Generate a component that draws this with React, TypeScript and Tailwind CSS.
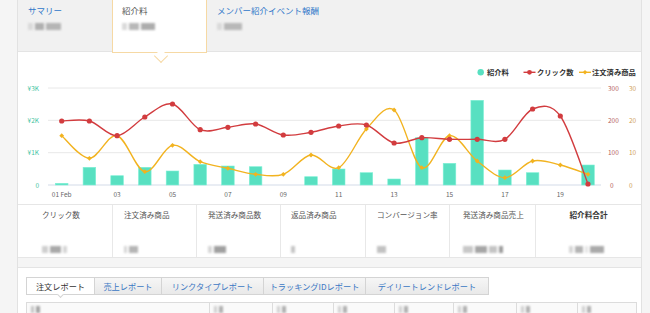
import React from "react";

const FONT = { fontFamily: '"Noto Sans CJK JP", "Noto Sans", sans-serif' };

const X0 = 61.7;
const STEP = 27.7;
const BASE = 185;

const red = [121, 121, 135.7, 117, 104, 129.7, 127.3, 124, 135, 132.3, 126, 125, 143, 137.7, 139.3, 139.3, 139.3, 109, 116, 184];
const yellow = [135.7, 158.3, 135.7, 171.7, 145.3, 161.7, 168.3, 174.3, 174.3, 155, 167.7, 129, 110, 167.7, 135.7, 161, 177.7, 161, 165, 174.3];
const bars: (number | null)[] = [183.3, 167.3, 175.7, 167.3, 171, 164.3, 166, 166.7, null, 176.7, 169, 172.7, 179, 137.7, 163.3, 100.3, 170, 172.7, null, 165];

const xAt = (i: number) => X0 + i * STEP;

function spline(ys: number[]) {
  const pts = ys.map((y, i) => [xAt(i), y]);
  let d = `M${pts[0][0]},${pts[0][1]}`;
  for (let i = 0; i < pts.length - 1; i++) {
    const p0 = pts[i - 1] || pts[i];
    const p1 = pts[i];
    const p2 = pts[i + 1];
    const p3 = pts[i + 2] || p2;
    const c1x = p1[0] + (p2[0] - p0[0]) / 6;
    const c1y = p1[1] + (p2[1] - p0[1]) / 6;
    const c2x = p2[0] - (p3[0] - p1[0]) / 6;
    const c2y = p2[1] - (p3[1] - p1[1]) / 6;
    d += ` C${c1x},${c1y} ${c2x},${c2y} ${p2[0]},${p2[1]}`;
  }
  return d;
}

// pixelated placeholder for hidden numbers
function Blur({ parts }: { parts: [number, string][] }) {
  return (
    <div className="flex h-[7px] items-center gap-[2px] blur-[0.8px]">
      {parts.map(([w, c], i) => (
        <span key={i} className="h-[7px]" style={{ width: w, backgroundColor: c }} />
      ))}
    </div>
  );
}

const stats = [
  { label: "クリック数", w: "w-[95px] pl-[24px]", parts: [[6, "#cfcfcf"], [11, "#a9a9a9"], [4, "#d6d6d6"]] },
  { label: "注文済み商品", w: "w-[84px] pl-[11px]", parts: [[3, "#d6d6d6"], [9, "#b5b5b5"]] },
  { label: "発送済み商品数", w: "w-[84px] pl-[11px]", parts: [[4, "#d6d6d6"], [12, "#a0a0a0"]] },
  { label: "返品済み商品", w: "w-[85px] pl-[10px]", parts: [[4, "#c6c6c6"]] },
  { label: "コンバージョン率", w: "w-[84px] pl-[11px]", parts: [[9, "#c2c2c2"]] },
  { label: "発送済み商品売上", w: "w-[86px] pl-[13px]", parts: [[10, "#c8c8c8"], [12, "#a6a6a6"], [8, "#c4c4c4"], [4, "#9c9c9c"]] },
];

const tabs = [
  { t: "注文レポート", w: "w-[69px]", active: true },
  { t: "売上レポート", w: "w-[67px]" },
  { t: "リンクタイプレポート", w: "w-[102px]" },
  { t: "トラッキングIDレポート", w: "w-[102px]" },
  { t: "デイリートレンドレポート", w: "w-[123px]" },
];

const cols = ["w-[183px]", "w-[63px]", "w-[61px]", "w-[61px]", "w-[59px]", "w-[63px]", "w-[61px]", "flex-1"];

export default function App() {
  return (
    <div className="flex h-[313px] w-[650px] overflow-hidden bg-[#f5f5f5]" style={FONT}>
      <div className="w-[18px] shrink-0 border-r border-[#e2e2e2]" />

      <div className="flex w-[623px] shrink-0 flex-col">
        {/* header tabs */}
        <div className="relative z-10 flex h-[52px] shrink-0 border-b border-[#e4e4e4] bg-[#f1f1f1]">
          <div className="w-[94px] pl-[10px] pt-[5px]">
            <div className="text-[8.5px] leading-[10px] text-[#2f77c9]">サマリー</div>
            <div className="mt-[8px]">
              <Blur parts={[[5, "#dadada"], [9, "#b0b0b0"], [15, "#b5b5b5"]]} />
            </div>
          </div>
          <div className="relative h-[53px] w-[95px] border-x border-b border-[#f6d9a4] bg-white pl-[9px] pt-[5px]">
            <div className="text-[8.5px] leading-[10px] text-[#555]">紹介料</div>
            <div className="mt-[8px]">
              <Blur parts={[[5, "#dadada"], [10, "#b8b8b8"], [14, "#adadad"]]} />
            </div>
            <div className="absolute left-[43px] top-[51px] h-[10px] w-[10px] rotate-45 border-b border-r border-[#f6d9a4] bg-white" />
          </div>
          <div className="pl-[10px] pt-[5px]">
            <div className="text-[8.5px] leading-[10px] text-[#2f77c9]">メンバー紹介イベント報酬</div>
            <div className="mt-[8px]">
              <Blur parts={[[5, "#dadada"], [18, "#b8b8b8"]]} />
            </div>
          </div>
        </div>

        {/* chart */}
        <div className="h-[152px] shrink-0 bg-white">
          <svg width="623" height="152" viewBox="18 52 623 152">
            {[88, 120.3, 152.7].map((y) => (
              <line key={y} x1="48" x2="601" y1={y} y2={y} stroke="#e8e8e8" strokeWidth="1" />
            ))}
            <line x1="48" x2="601" y1={BASE} y2={BASE} stroke="#d3dbe8" strokeWidth="1" />

            {bars.map((top, i) =>
              top === null ? null : (
                <rect
                  key={i}
                  x={xAt(i) - 6.3}
                  y={top}
                  width="12.6"
                  height={BASE - top}
                  fill="#58e0c1"
                  stroke="#7ff0d6"
                  strokeWidth="0.6"
                />
              )
            )}

            <path d={spline(yellow)} fill="none" stroke="#f2b320" strokeWidth="1.4" />
            <path d={spline(red)} fill="none" stroke="#d23c3f" strokeWidth="1.4" />
            {yellow.map((y, i) => (
              <path key={i} d={`M${xAt(i)},${y - 2.4} L${xAt(i) + 2.4},${y} L${xAt(i)},${y + 2.4} L${xAt(i) - 2.4},${y} Z`} fill="#f2b320" />
            ))}
            {red.map((y, i) => (
              <circle key={i} cx={xAt(i)} cy={y} r="2.6" fill="#d23c3f" />
            ))}

            <g fontSize="6.5" fill="#3fc4a2" textAnchor="end">
              <text x="39" y="90.5">¥3K</text>
              <text x="39" y="122.8">¥2K</text>
              <text x="39" y="155.2">¥1K</text>
              <text x="39" y="187.5">0</text>
            </g>
            <g fontSize="6.5" fill="#b5615d">
              <text x="608" y="90.5">300</text>
              <text x="608" y="122.8">200</text>
              <text x="608" y="155.2">100</text>
              <text x="610" y="187.5">0</text>
            </g>
            <g fontSize="6.5" fill="#d1a15a">
              <text x="629" y="90.5">30</text>
              <text x="629" y="122.8">20</text>
              <text x="629" y="155.2">10</text>
              <text x="629" y="187.5">0</text>
            </g>
            <g fontSize="6.5" fill="#666" textAnchor="middle">
              <text x={xAt(0)} y="197">01 Feb</text>
              {[2, 4, 6, 8, 10, 12, 14, 16, 18].map((i) => (
                <text key={i} x={xAt(i)} y="197">
                  {String(i + 1).padStart(2, "0")}
                </text>
              ))}
            </g>

            <g fontSize="7.3" fill="#333" fontWeight="bold">
              <circle cx="480.7" cy="72.3" r="3.2" fill="#58e0c1" />
              <text x="487" y="75">紹介料</text>
              <line x1="523.5" x2="535.5" y1="72.3" y2="72.3" stroke="#d23c3f" strokeWidth="1.4" />
              <circle cx="529.5" cy="72.3" r="2.4" fill="#d23c3f" />
              <text x="537" y="75">クリック数</text>
              <line x1="579" x2="591" y1="72.3" y2="72.3" stroke="#f2b320" strokeWidth="1.4" />
              <path d="M585,70 L587.3,72.3 L585,74.6 L582.7,72.3 Z" fill="#f2b320" />
              <text x="592" y="75">注文済み商品</text>
            </g>
          </svg>
        </div>

        {/* stats row */}
        <div className="flex h-[54px] shrink-0 border-y border-[#e6e6e6] bg-white">
          {stats.map((s) => (
            <div key={s.label} className={`${s.w} shrink-0 border-r border-[#e8e8e8] pt-[5px]`}>
              <div className="text-[7.6px] leading-[10px] text-[#555]">{s.label}</div>
              <div className="mt-[26px]">
                <Blur parts={s.parts as [number, string][]} />
              </div>
            </div>
          ))}
          <div className="flex flex-1 flex-col items-center pt-[5px]">
            <div className="text-[7.6px] font-bold leading-[10px] text-[#333]">紹介料合計</div>
            <div className="mt-[26px] pr-[4px]">
              <Blur parts={[[4, "#d6d6d6"], [8, "#b4b4b4"], [3, "#e4e4e4"], [14, "#aaaaaa"]]} />
            </div>
          </div>
        </div>

        <div className="h-[9px] shrink-0" />

        {/* report panel */}
        <div className="flex-1 border-t border-[#e4e4e4] bg-white pl-[8px] pr-[4px] pt-[9px]">
          <div className="flex h-[18px]">
            {tabs.map((t) =>
              t.active ? (
                <div
                  key={t.t}
                  className={`${t.w} relative flex items-center justify-center border border-[#d4d4d4] bg-white text-[8.2px] text-[#333]`}
                >
                  {t.t}
                  <div className="absolute left-[31px] top-[14px] h-[5px] w-[5px] rotate-45 border-b border-r border-[#d4d4d4] bg-white" />
                </div>
              ) : (
                <div
                  key={t.t}
                  className={`${t.w} flex items-center justify-center border border-l-0 border-[#d4d4d4] bg-gradient-to-b from-[#f6f6f6] to-[#e9e9e9] text-[8.2px] text-[#3b78c4]`}
                >
                  {t.t}
                </div>
              )
            )}
          </div>
          <div className="mt-[7px] flex h-[20px] border border-[#dcdcdc] bg-[#fafafa]">
            {cols.map((c, i) => (
              <div key={i} className={`${c} border-r border-[#dcdcdc] pl-[4px] pt-[3px] last:border-r-0`}>
                <Blur parts={i === 0 ? [[3, "#c4c4c4"], [4, "#a4a4a4"]] : [[3, "#d0d0d0"], [4, "#b0b0b0"]]} />
              </div>
            ))}
          </div>
        </div>
      </div>

      <div className="flex-1 border-l border-[#e2e2e2]" />
    </div>
  );
}
